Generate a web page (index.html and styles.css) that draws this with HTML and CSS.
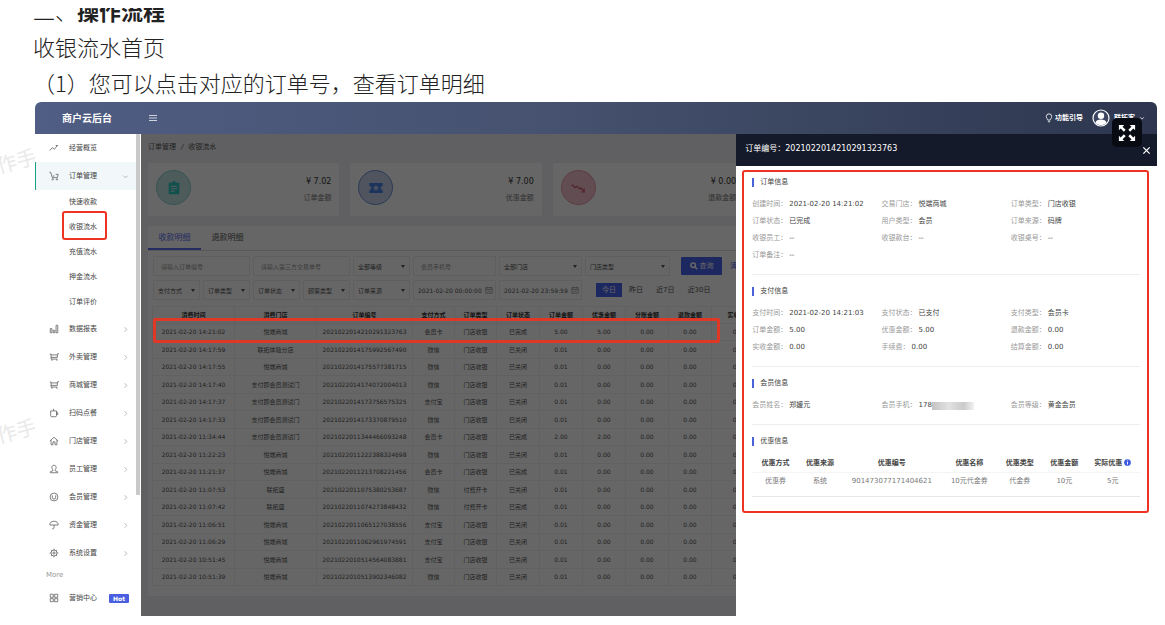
FILE: index.html
```html
<!DOCTYPE html>
<html lang="zh-CN">
<head>
<meta charset="utf-8">
<title>收银流水</title>
<link rel="stylesheet" href="styles.css">
</head>
<body>
<svg class="defs" aria-hidden="true">
  <symbol id="chev" viewBox="0 0 8 8"><path d="M3 1.500 5.500 4 3 6.500"/></symbol>
  <symbol id="cart" viewBox="0 0 12 12"><path d="M.5 1.500h1.500l2 6.500h6l1-4h-3M4.500 6h2"/><circle cx="4.500" cy="10" r=".8"/><circle cx="9.500" cy="10" r=".8"/></symbol>
  <symbol id="shop" viewBox="0 0 12 12"><path d="M1 2.500h1.500v6h7.500M2.500 6.500H10V3.500H2.500M10 3.500l.5-1.500H12M3.500 8.500v2M9.500 8.500v2"/></symbol>
</svg>
<span class="watermark wm-a" aria-hidden="true">作手册</span>
<span class="watermark wm-b" aria-hidden="true">作手册</span>

<article class="doc">
  <h2 class="doc-title"><span>二、<b>操作流程</b></span></h2>
  <p>收银流水首页</p>
  <p>（1）您可以点击对应的订单号，查看订单明细</p>
</article>

<div class="app">
  <header class="topbar">
    <strong class="brand">商户云后台</strong>
    <button class="icon-btn" aria-label="菜单"><svg class="ic" viewBox="0 0 10 10"><path d="M1 2.500h8M1 5h8M1 7.500h8"/></svg></button>
    <div class="top-right">
      <a href="#" class="guide"><svg class="ic" viewBox="0 0 10 12"><path d="M3.500 8.500C3.500 7 1.800 6.500 1.800 4.200a3.200 3.200 0 0 1 6.400 0C8.200 6.500 6.500 7 6.500 8.500zM3.700 10.500h2.600"/></svg>功能引导</a>
      <button class="user"><svg class="avatar" viewBox="0 0 18 18"><circle cx="9" cy="9" r="8" fill="#3c4662" stroke="#fff" stroke-width="1.200"/><circle cx="9" cy="6.800" r="3.200" fill="#fff"/><path d="M3.500 14c.4-2.800 2.500-3.600 5.500-3.600s5.100.8 5.500 3.600C13 15.500 11 16 9 16s-4-.5-5.500-2z" fill="#fff"/></svg>联拓客<svg class="ic tiny" viewBox="0 0 8 8"><path d="m1.500 3 2.500 2.500L6.500 3"/></svg></button>
    </div>
  </header>

  <div class="body">
    <nav class="side">
      <ul class="menu">
        <li><a href="#"><svg class="ic" viewBox="0 0 12 12"><path d="m1 9 3-3.500 2.500 2L10 3M8 3h3"/></svg>经营概览</a></li>
        <li class="open"><a href="#"><svg class="ic"><use href="#cart"/></svg>订单管理<svg class="ic arrow" viewBox="0 0 8 8"><path d="M1.500 3 4 5.500 6.500 3"/></svg></a>
          <ul class="sub">
            <li><a href="#">快速收款</a></li>
            <li class="marked"><a href="#">收银流水</a></li>
            <li><a href="#">充值流水</a></li>
            <li><a href="#">押金流水</a></li>
            <li><a href="#">订单评价</a></li>
          </ul>
        </li>
        <li><a href="#"><svg class="ic" viewBox="0 0 12 12"><path d="M1.500 5.500h2v5h-2zM5 7.500h2v3H5zM8.500 1.500h2v9h-2z"/></svg>数据报表<svg class="ic arrow"><use href="#chev"/></svg></a></li>
        <li><a href="#"><svg class="ic"><use href="#shop"/></svg>外卖管理<svg class="ic arrow"><use href="#chev"/></svg></a></li>
        <li><a href="#"><svg class="ic"><use href="#shop"/></svg>商城管理<svg class="ic arrow"><use href="#chev"/></svg></a></li>
        <li><a href="#"><svg class="ic" viewBox="0 0 12 12"><path d="M2 3.500h7V9a1.500 1.500 0 0 1-1.500 1.500h-4A1.500 1.500 0 0 1 2 9zM9 5.500h1.500v2.500H9M5.500 1v2.500"/></svg>扫码点餐<svg class="ic arrow"><use href="#chev"/></svg></a></li>
        <li><a href="#"><svg class="ic" viewBox="0 0 12 12"><path d="m1 6 5-4.500L11 6M2.500 5v5.500h2.300V7h2.400v3.500h2.300V5"/></svg>门店管理<svg class="ic arrow"><use href="#chev"/></svg></a></li>
        <li><a href="#"><svg class="ic" viewBox="0 0 12 12"><path d="M6 1.500c3.500 0 2.800 4.500 1.200 5.500v1l3.300 1.300v1.200h-9V9.300L4.800 8V7C3.200 6 2.500 1.500 6 1.500z"/></svg>员工管理<svg class="ic arrow"><use href="#chev"/></svg></a></li>
        <li><a href="#"><svg class="ic" viewBox="0 0 12 12"><circle cx="6" cy="6" r="4.700"/><path d="M4 4v2.500a2 2 0 0 0 4 0V4"/></svg>会员管理<svg class="ic arrow"><use href="#chev"/></svg></a></li>
        <li><a href="#"><svg class="ic" viewBox="0 0 12 12"><path d="M1 6a5 4.500 0 0 1 10 0zM6 6v3.500a1.200 1.200 0 0 1-2.200.5"/></svg>资金管理<svg class="ic arrow"><use href="#chev"/></svg></a></li>
        <li><a href="#"><svg class="ic" viewBox="0 0 12 12"><circle cx="6" cy="6" r="3.600"/><circle cx="6" cy="6" r="1.300"/><path d="M6 .8v1.600M6 9.600v1.600M.8 6h1.600M9.600 6h1.600M2.300 2.300l1.100 1.100M8.600 8.600l1.100 1.100M2.300 9.700l1.100-1.100M8.600 3.400l1.100-1.100"/></svg>系统设置<svg class="ic arrow"><use href="#chev"/></svg></a></li>
        <li class="group">More</li>
        <li><a href="#"><svg class="ic" viewBox="0 0 12 12"><path d="M1.500 1.500h3.700v3.700H1.500zM6.800 1.500h3.700v3.700H6.800zM1.500 6.800h3.700v3.700H1.500zM6.800 6.800h3.700v3.700H6.800z"/></svg>营销中心<span class="hot">Hot</span></a></li>
      </ul>
    </nav>

    <main class="main">
      <div class="crumb">订单管理<i>/</i>收银流水</div>
      <section class="stats">
        <div class="stat teal"><span class="disc"><svg viewBox="0 0 18 18"><path fill="currentColor" fill-rule="evenodd" d="M3 3h4a2 2 0 0 1 4 0h4v13H3zM5.500 6.500v1.300h7V6.500zm0 2.700v1.300h7V9.200zm0 2.700v1.300h4.500v-1.300z"/></svg></span><p><b>¥ 7.02</b>订单金额</p></div>
        <div class="stat blue"><span class="disc"><svg viewBox="0 0 18 18"><path fill="currentColor" fill-rule="evenodd" d="M1.500 3.500h15v3.300a2.200 2.200 0 0 0 0 4.400v3.300h-15v-3.300a2.200 2.200 0 0 0 0-4.400zM9 5 8 7.800H5.200l2.300 1.700-.9 2.800L9 10.600l2.400 1.700-.9-2.800 2.300-1.700H10z"/></svg></span><p><b>¥ 7.00</b>优惠金额</p></div>
        <div class="stat pink"><span class="disc"><svg viewBox="0 0 18 18"><path fill="none" stroke="currentColor" stroke-width="1.500" d="m2 5 3.500 3.500L8 7l3 3 1.500-1 3.500 4M16 9.500v3.800h-3.500"/></svg></span><p><b>¥ 0.00</b>退款金额</p></div>
      </section>

      <section class="panel">
        <div class="tabs"><button class="on">收款明细</button><button>退款明细</button></div>
        <form class="filters">
          <input class="wide" aria-label="订单编号" placeholder="请输入订单编号">
          <input class="wide" aria-label="第三方交易单号" placeholder="请输入第三方交易单号">
          <span class="pick"><select aria-label="等级"><option>全部等级</option></select></span>
          <input aria-label="会员手机号" placeholder="会员手机号">
          <span class="pick"><select aria-label="门店"><option>全部门店</option></select></span>
          <span class="pick"><select aria-label="门店类型"><option>门店类型</option></select></span>
          <div class="acts"><button type="button" class="primary"><svg class="ic" viewBox="0 0 10 10"><circle cx="4" cy="4" r="2.800"/><path d="m6 6 3 3"/></svg>查询</button><button type="button" class="ghost">清空</button></div>
          <span class="pick"><select aria-label="支付方式"><option>支付方式</option></select></span>
          <span class="pick"><select aria-label="订单类型"><option>订单类型</option></select></span>
          <span class="pick"><select aria-label="订单状态"><option>订单状态</option></select></span>
          <span class="pick"><select aria-label="顾客类型"><option>顾客类型</option></select></span>
          <span class="pick"><select aria-label="订单来源"><option>订单来源</option></select></span>
          <span class="date"><input aria-label="开始时间" value="2021-02-20 00:00:00"><svg class="ic" viewBox="0 0 10 10"><path d="M1 2h8v7H1zM1 4.300h8M3 1v2M7 1v2M3 6.500h4"/></svg></span>
          <span class="date"><input aria-label="结束时间" value="2021-02-20 23:59:59"><svg class="ic" viewBox="0 0 10 10"><path d="M1 2h8v7H1zM1 4.300h8M3 1v2M7 1v2M3 6.500h4"/></svg></span>
          <div class="quick"><button type="button" class="on">今日</button><button type="button">昨日</button><button type="button">近7日</button><button type="button">近30日</button></div>
        </form>
        <div class="grid-wrap">
          <table class="orders">
            <colgroup><col class="c82"><col class="c82"><col class="c96"><col class="c42"><col class="c42"><col class="c43"><col class="c43"><col class="c43"><col class="c43"><col class="c43"><col class="c56"></colgroup>
            <thead><tr><th>消费时间</th><th>消费门店</th><th>订单编号</th><th>支付方式</th><th>订单类型</th><th>订单状态</th><th>订单金额</th><th>优惠金额</th><th>分账金额</th><th>退款金额</th><th>实收金额</th></tr></thead>
            <tbody>
              <tr><td>2021-02-20 14:21:02</td><td>悦端商城</td><td>2021022014210291323763</td><td>会员卡</td><td>门店收银</td><td>已完成</td><td>5.00</td><td>5.00</td><td>0.00</td><td>0.00</td><td>0.00</td></tr>
              <tr><td>2021-02-20 14:17:59</td><td>联拓体验分店</td><td>2021022014175992567490</td><td>微信</td><td>门店收银</td><td>已关闭</td><td>0.01</td><td>0.00</td><td>0.00</td><td>0.00</td><td>0.00</td></tr>
              <tr><td>2021-02-20 14:17:55</td><td>悦端商城</td><td>2021022014175577381715</td><td>微信</td><td>门店收银</td><td>已关闭</td><td>0.01</td><td>0.00</td><td>0.00</td><td>0.00</td><td>0.00</td></tr>
              <tr><td>2021-02-20 14:17:40</td><td>支付即会员测试门</td><td>2021022014174072004013</td><td>微信</td><td>门店收银</td><td>已关闭</td><td>0.01</td><td>0.00</td><td>0.00</td><td>0.00</td><td>0.00</td></tr>
              <tr><td>2021-02-20 14:17:37</td><td>支付即会员测试门</td><td>2021022014173756575325</td><td>支付宝</td><td>门店收银</td><td>已关闭</td><td>0.01</td><td>0.00</td><td>0.00</td><td>0.00</td><td>0.00</td></tr>
              <tr><td>2021-02-20 14:17:33</td><td>支付即会员测试门</td><td>2021022014173370879510</td><td>微信</td><td>门店收银</td><td>已关闭</td><td>0.01</td><td>0.00</td><td>0.00</td><td>0.00</td><td>0.00</td></tr>
              <tr><td>2021-02-20 11:34:44</td><td>支付即会员测试门</td><td>2021022011344466093248</td><td>会员卡</td><td>门店收银</td><td>已完成</td><td>2.00</td><td>2.00</td><td>0.00</td><td>0.00</td><td>0.00</td></tr>
              <tr><td>2021-02-20 11:22:23</td><td>悦端商城</td><td>2021022011222388324698</td><td>微信</td><td>门店收银</td><td>已关闭</td><td>0.01</td><td>0.00</td><td>0.00</td><td>0.00</td><td>0.00</td></tr>
              <tr><td>2021-02-20 11:21:37</td><td>悦端商城</td><td>2021022011213708221456</td><td>会员卡</td><td>门店收银</td><td>已完成</td><td>0.01</td><td>0.00</td><td>0.00</td><td>0.00</td><td>0.00</td></tr>
              <tr><td>2021-02-20 11:07:53</td><td>联拓盛</td><td>2021022011075380253687</td><td>微信</td><td>付费开卡</td><td>已关闭</td><td>0.01</td><td>0.00</td><td>0.00</td><td>0.00</td><td>0.00</td></tr>
              <tr><td>2021-02-20 11:07:42</td><td>联拓盛</td><td>2021022011074273848432</td><td>微信</td><td>付费开卡</td><td>已完成</td><td>0.01</td><td>0.00</td><td>0.00</td><td>0.00</td><td>0.00</td></tr>
              <tr><td>2021-02-20 11:06:51</td><td>悦端商城</td><td>2021022011065127038556</td><td>支付宝</td><td>门店收银</td><td>已关闭</td><td>0.01</td><td>0.00</td><td>0.00</td><td>0.00</td><td>0.00</td></tr>
              <tr><td>2021-02-20 11:06:29</td><td>悦端商城</td><td>2021022011062961974591</td><td>支付宝</td><td>门店收银</td><td>已关闭</td><td>0.01</td><td>0.00</td><td>0.00</td><td>0.00</td><td>0.00</td></tr>
              <tr><td>2021-02-20 10:51:45</td><td>悦端商城</td><td>2021022010514564083881</td><td>支付宝</td><td>门店收银</td><td>已关闭</td><td>0.01</td><td>0.00</td><td>0.00</td><td>0.00</td><td>0.00</td></tr>
              <tr><td>2021-02-20 10:51:39</td><td>悦端商城</td><td>2021022010513902346082</td><td>微信</td><td>门店收银</td><td>已关闭</td><td>0.01</td><td>0.00</td><td>0.00</td><td>0.00</td><td>0.00</td></tr>
            </tbody>
          </table>
          <div class="row-mark"></div>
        </div>
      </section>
      <div class="shade"></div>
    </main>

    <aside class="drawer">
      <header class="drawer-head"><h3>订单编号：2021022014210291323763</h3><button class="icon-btn" aria-label="关闭"><svg class="ic" viewBox="0 0 10 10"><path d="m1.500 1.500 7 7M8.500 1.500l-7 7"/></svg></button></header>
      <div class="detail">
        <section>
          <h4>订单信息</h4>
          <dl class="fields">
            <div><dt>创建时间：</dt><dd>2021-02-20 14:21:02</dd></div><div><dt>交易门店：</dt><dd>悦端商城</dd></div><div><dt>订单类型：</dt><dd>门店收银</dd></div>
            <div><dt>订单状态：</dt><dd>已完成</dd></div><div><dt>用户类型：</dt><dd>会员</dd></div><div><dt>订单来源：</dt><dd>码牌</dd></div>
            <div><dt>收银员工：</dt><dd>--</dd></div><div><dt>收银款台：</dt><dd>--</dd></div><div><dt>收银桌号：</dt><dd>--</dd></div>
            <div><dt>订单备注：</dt><dd>--</dd></div>
          </dl>
        </section>
        <section>
          <h4>支付信息</h4>
          <dl class="fields">
            <div><dt>支付时间：</dt><dd>2021-02-20 14:21:03</dd></div><div><dt>支付状态：</dt><dd>已支付</dd></div><div><dt>支付类型：</dt><dd>会员卡</dd></div>
            <div><dt>订单金额：</dt><dd>5.00</dd></div><div><dt>优惠金额：</dt><dd>5.00</dd></div><div><dt>退款金额：</dt><dd>0.00</dd></div>
            <div><dt>实收金额：</dt><dd>0.00</dd></div><div><dt>手续费：</dt><dd>0.00</dd></div><div><dt>结算金额：</dt><dd>0.00</dd></div>
          </dl>
        </section>
        <section>
          <h4>会员信息</h4>
          <dl class="fields">
            <div><dt>会员姓名：</dt><dd>郑媛元</dd></div><div><dt>会员手机：</dt><dd>178<span class="mask"></span></dd></div><div><dt>会员等级：</dt><dd>黄金会员</dd></div>
          </dl>
        </section>
        <section>
          <h4>优惠信息</h4>
          <table class="coupons">
            <colgroup><col class="p12"><col class="p11"><col class="p26"><col class="p14"><col class="p12"><col class="p11"><col class="p14"></colgroup>
            <thead><tr><th>优惠方式</th><th>优惠来源</th><th>优惠编号</th><th>优惠名称</th><th>优惠类型</th><th>优惠金额</th><th>实际优惠<svg class="info" viewBox="0 0 10 10"><circle cx="5" cy="5" r="4.800" fill="#3f5be0"/><path d="M5 4.300v3.500M5 2.200v1.200" stroke="#fff" stroke-width="1.300"/></svg></th></tr></thead>
            <tbody><tr><td>优惠券</td><td>系统</td><td>901473077171404621</td><td>10元代金券</td><td>代金券</td><td>10元</td><td>5元</td></tr></tbody>
          </table>
        </section>
      </div>
    </aside>
  </div>
  <button class="expand" aria-label="全屏"><svg viewBox="0 0 20 20"><path fill="#fff" d="M1 1h6L5 3l3.500 3.500-2 2L3 5 1 7zM19 1v6l-2-2-3.500 3.500-2-2L15 3l-2-2zM1 19v-6l2 2 3.500-3.500 2 2L5 17l2 2zM19 19h-6l2-2-3.500-3.500 2-2L17 15l2-2z"/></svg></button>
</div>
</body>
</html>
```
FILE: styles.css
```css
* { box-sizing: border-box; }
body {
  margin: 8px 8px 0 33px;
  background: #fff;
  color: #444;
  font: 7px/17px "DejaVu Sans", "Noto Sans CJK SC", sans-serif;
  overflow-x: hidden;
}
h2, h3, h4, p, dl, dd, ul { margin: 0; padding: 0; }
ul { list-style: none; }
a { color: inherit; text-decoration: none; }
button, input, select { font: inherit; color: inherit; margin: 0; padding: 0; border: 0; background: none; }
.defs { position: absolute; width: 0; height: 0; }
.ic { width: 10px; height: 10px; fill: none; stroke: currentColor; stroke-width: 1; flex: none; }
.icon-btn { display: flex; }

/* document text */
.doc { padding-bottom: 2px; color: #222; font: 300 22px/36px "Noto Sans CJK SC", sans-serif; }
.doc-title { display: flex; align-items: flex-end; height: 20px; overflow: hidden; font-size: 22px; font-weight: 300; }
.doc-title b { font-weight: 700; }
.watermark {
  position: absolute; left: -4px; z-index: -1;
  color: #e9e9e9; font: 20px/24px "Noto Sans CJK SC", sans-serif;
  transform: rotate(-15deg);
}
.wm-a { top: 146px; }
.wm-b { top: 416px; }

/* shell */
.app { position: relative; margin-left: 2px; border-radius: 6px 6px 0 0; }
.topbar {
  display: flex; align-items: center; height: 32px; padding: 0 12px 0 27px;
  border-radius: 6px 6px 0 0; color: #fff;
  background: linear-gradient(90deg, #505d84, #46526f 45%, #2d364e);
}
.brand { width: 86px; font-size: 10px; }
.topbar .icon-btn { color: #cdd2de; }
.top-right { display: flex; align-items: center; gap: 9px; margin-left: auto; font-weight: 700; }
.guide { display: flex; align-items: center; gap: 1px; }
.user { display: flex; align-items: center; gap: 4px; }
.avatar { width: 18px; height: 18px; }
.tiny { width: 6px; height: 6px; }
.body { position: relative; display: flex; align-items: stretch; }
.expand {
  position: absolute; top: 16px; right: 15px; z-index: 6;
  display: grid; place-items: center; width: 30px; height: 29px;
  border-radius: 5px; background: #090b12;
}
.expand svg { width: 18px; height: 18px; }

/* sidebar */
.side { width: 106px; flex: none; padding-bottom: 4px; background: linear-gradient(#c9c9c9, #c9c9c9) right 1px top 0 / 4px 361px no-repeat #fff; }
.menu > li > a { display: flex; align-items: center; height: 28px; padding: 0 12px 0 14px; }
.menu > li > a > .ic:first-child { margin-right: 10px; color: #666; }
.menu > li > a > .arrow { width: 7px; height: 7px; margin-left: auto; color: #aaa; }
.menu .open > a { margin-right: 5px; padding-right: 7px; background: #f2f7fa; box-shadow: inset 1px 0 #1aa088; }
.sub li { position: relative; }
.sub a { display: block; height: 25px; padding-left: 34px; line-height: 24px; }
.marked::after {
  content: ""; position: absolute; inset: -4px 34px 0 27px;
  border: 2px solid #ee3322; border-radius: 3px;
}
.group { height: 17px; padding-left: 11px; line-height: 16px; color: #999; }
.hot { margin-left: 12px; padding: 0 4px; border-radius: 1px; color: #fff; background: #4a5fe0; font-size: 6px; line-height: 9px; font-weight: 700; }

/* main */
.main { position: relative; flex: 1; min-width: 0; padding: 5px 8px 20px 7px; color: #555; background: #eff1f4; }
.shade { position: absolute; inset: 0; z-index: 2; background: rgba(0, 0, 0, .6); }
.crumb { height: 24px; }
.crumb i { margin: 0 5px; }
.stats { display: grid; grid-template-columns: repeat(5, 1fr); gap: 11px; }
.stat { display: flex; justify-content: space-between; height: 53px; padding: 7px 8px; border-radius: 2px; background: #fff; }
.stat p { padding-top: 3px; text-align: right; color: #777; }
.stat b { display: block; color: #333; font-size: 8px; font-weight: 400; }
.disc { display: grid; place-items: center; width: 35px; height: 35px; border: 1px solid currentColor; border-radius: 50%; }
.disc svg { width: 16px; height: 16px; }
.teal .disc { color: #2cc8c0; background: #c4e4e4; border-color: #84cfcc; }
.blue .disc { color: #4a84e8; background: #c6d3ec; border-color: #6f92d4; }
.pink .disc { color: #d8607c; background: #f4c2cc; border-color: #e698a8; }
.panel { margin-top: 10px; padding-bottom: 10px; border-radius: 2px; background: #fff; }
.tabs { display: flex; height: 25px; border-bottom: 1px solid #ddd; }
.tabs button { width: 53px; border-bottom: 2px solid transparent; font-size: 8px; }
.tabs .on { color: #5a6cf0; border-color: #5a6cf0; }
.filters {
  display: grid; grid-template-columns: repeat(4, 47px) 57px 83px 83px 85px auto;
  grid-auto-rows: 20px; gap: 4px 3px; padding: 5px 5px 6px; font-size: 6px;
}
.filters input, .filters select { width: 100%; height: 100%; border: 1px solid #eee; border-radius: 1px; appearance: none; }
.filters input { padding: 0 7px; }
.filters input::placeholder { color: #999; opacity: 1; }
.filters select { padding: 0 4px; }
.wide { grid-column: span 2; }
.pick, .date { position: relative; }
.pick::after {
  content: ""; position: absolute; right: 5px; top: 9px;
  border: 2px solid transparent; border-top: 3px solid #555;
}
.filters .date input { padding: 0 4px; }
.date .ic { position: absolute; right: 3px; top: 6px; width: 8px; height: 8px; color: #999; }
.acts { display: flex; gap: 4px; padding: 1px 8px; font-size: 7px; }
.acts button { display: flex; align-items: center; justify-content: center; gap: 2px; width: 41px; border-radius: 1px; }
.acts .ghost { justify-content: flex-start; padding-left: 4px; color: #4a62e8; }
.acts .ic { width: 8px; height: 8px; stroke-width: 2; }
.acts .primary, .quick .on { color: #fff; background: #4a62f0; }
.quick { display: flex; align-items: center; gap: 1px; grid-column: 8 / span 2; padding-left: 11px; font-size: 7px; }
.quick button { height: 14px; padding: 0 6px; line-height: 14px; }
.grid-wrap { position: relative; padding: 0 4px; }
table { border-collapse: collapse; table-layout: fixed; }
th, td { padding: 0; text-align: center; white-space: nowrap; }
.orders { width: 615px; font-size: 6px; line-height: 10px; }
.orders th, .orders td { height: 17px; border: 1px solid #f2f2f2; }
.orders tbody tr:nth-child(even) td { height: 18px; }
.orders th { color: #333; }
.c82 { width: 82px; }
.c96 { width: 96px; }
.c42 { width: 42px; }
.c43 { width: 43px; }
.c56 { width: 56px; }
.row-mark { position: absolute; left: 5px; top: 12px; z-index: 3; width: 567px; height: 25px; border: 3px solid #e03826; border-radius: 2px; }

/* drawer */
.drawer { position: absolute; top: 0; right: 0; bottom: 0; z-index: 4; width: 37.5%; background: #fff; }
.drawer-head { display: flex; align-items: center; justify-content: space-between; height: 32px; padding: 0 6px 3px 9px; color: #fff; background: #151a2a; }
.drawer-head h3 { font-size: 8px; font-weight: 400; }
.drawer-head .icon-btn { padding-top: 3px; }
.drawer-head .ic { width: 9px; height: 9px; stroke-width: 1.4; }
.detail { margin: 4px 8px 0 6px; padding: 2px 7px 14px 8px; border: 2px solid #ee3322; border-radius: 3px; }
.detail section + section { padding-top: 8px; border-top: 1px solid #eeeef2; }
.fields { display: grid; grid-template-columns: repeat(3, 1fr); padding-bottom: 10px; }
.fields div { display: flex; gap: 2px; }
.fields dt { color: #999; }
.fields dd { display: flex; align-items: center; color: #444; }
.detail h4 { position: relative; margin-bottom: 5px; padding-left: 8px; font-size: 7px; font-weight: 400; color: #444; }
.detail h4::before { content: ""; position: absolute; left: 0; top: 4px; width: 2px; height: 9px; background: #4a62d8; }
.mask { width: 42px; height: 8px; background: linear-gradient(90deg, #c4c4c4, #e2e2e2 40%, #cacaca 75%, #f2f2f2); }
.coupons { width: 100%; margin-top: 5px; line-height: 17px; color: #777; border-bottom: 1px solid #e6e6ea; }
.coupons th { color: #444; border-bottom: 1px solid #f4f4f4; }
.coupons td { padding-bottom: 6px; }
.info { width: 7px; height: 7px; margin-left: 2px; vertical-align: -1px; }
.p11 { width: 11%; }
.p12 { width: 12%; }
.p14 { width: 14%; }
.p26 { width: 26%; }
```
